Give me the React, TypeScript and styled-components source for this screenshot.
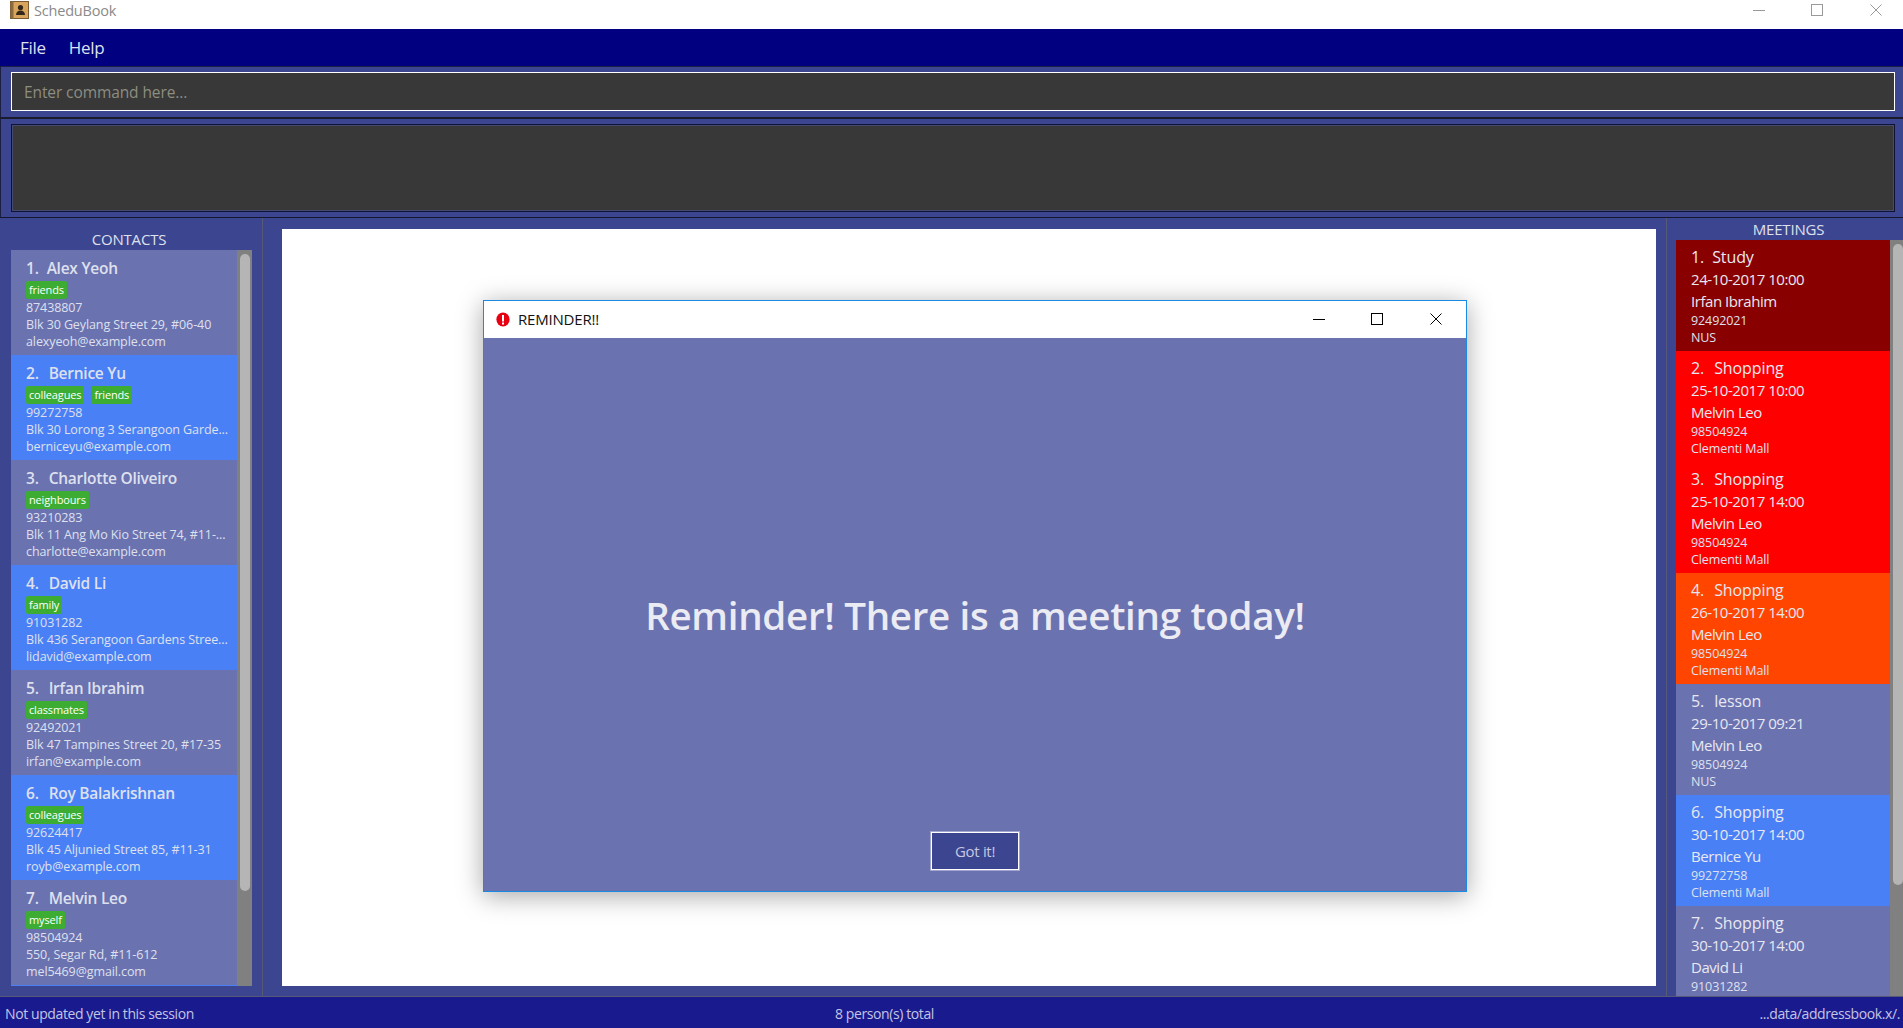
import React from 'react';
import styled, {createGlobalStyle} from 'styled-components';

const contacts = [
  {name: 'Alex Yeoh', tags: ['friends'], phone: '87438807', address: 'Blk 30 Geylang Street 29, #06-40', email: 'alexyeoh@example.com'},
  {name: 'Bernice Yu', tags: ['colleagues', 'friends'], phone: '99272758', address: 'Blk 30 Lorong 3 Serangoon Garde...', email: 'berniceyu@example.com'},
  {name: 'Charlotte Oliveiro', tags: ['neighbours'], phone: '93210283', address: 'Blk 11 Ang Mo Kio Street 74, #11-...', email: 'charlotte@example.com'},
  {name: 'David Li', tags: ['family'], phone: '91031282', address: 'Blk 436 Serangoon Gardens Stree...', email: 'lidavid@example.com'},
  {name: 'Irfan Ibrahim', tags: ['classmates'], phone: '92492021', address: 'Blk 47 Tampines Street 20, #17-35', email: 'irfan@example.com'},
  {name: 'Roy Balakrishnan', tags: ['colleagues'], phone: '92624417', address: 'Blk 45 Aljunied Street 85, #11-31', email: 'royb@example.com'},
  {name: 'Melvin Leo', tags: ['myself'], phone: '98504924', address: '550, Segar Rd, #11-612', email: 'mel5469@gmail.com'},
];

const meetings = [
  {title: 'Study', date: '24-10-2017 10:00', name: 'Irfan Ibrahim', phone: '92492021', place: 'NUS', bg: '#880000'},
  {title: 'Shopping', date: '25-10-2017 10:00', name: 'Melvin Leo', phone: '98504924', place: 'Clementi Mall', bg: '#ff0000'},
  {title: 'Shopping', date: '25-10-2017 14:00', name: 'Melvin Leo', phone: '98504924', place: 'Clementi Mall', bg: '#ff0000'},
  {title: 'Shopping', date: '26-10-2017 14:00', name: 'Melvin Leo', phone: '98504924', place: 'Clementi Mall', bg: '#ff4500'},
  {title: 'lesson', date: '29-10-2017 09:21', name: 'Melvin Leo', phone: '98504924', place: 'NUS', bg: '#6a72b0'},
  {title: 'Shopping', date: '30-10-2017 14:00', name: 'Bernice Yu', phone: '99272758', place: 'Clementi Mall', bg: '#4a80f5'},
  {title: 'Shopping', date: '30-10-2017 14:00', name: 'David Li', phone: '91031282', place: 'Clementi Mall', bg: '#6a72b0'},
];

const CaptionIcon: React.FC<{kind: 'min' | 'max' | 'close'; color: string}> = ({kind, color}) => (
  <svg width="14" height="14" viewBox="0 0 14 14" fill="none" stroke={color} strokeWidth="1" shapeRendering="crispEdges">
    {kind === 'min' && <path d="M1 7.5H13"/>}
    {kind === 'max' && <rect x="1.5" y="1.5" width="11" height="11"/>}
    {kind === 'close' && <path d="M1.5 1.5L12.5 12.5M12.5 1.5L1.5 12.5" shapeRendering="auto"/>}
  </svg>
);

const App: React.FC = () => (
  <Page>
    <Global/>
    <TitleBar>
      <svg width="19" height="18" viewBox="0 0 19 18">
        <rect x="0.5" y="0.5" width="18" height="17" fill="#d9a55c" stroke="#7a5a30"/>
        <rect x="0.5" y="0.5" width="3" height="17" fill="#8a6a3e"/>
        <circle cx="10.5" cy="6.5" r="2.6" fill="#33281a"/>
        <path d="M6 14c0-3 2-4.5 4.5-4.5S15 11 15 14z" fill="#33281a"/>
      </svg>
      <AppName>ScheduBook</AppName>
      <Caption><CaptionIcon kind="min" color="#999"/></Caption>
      <Caption><CaptionIcon kind="max" color="#999"/></Caption>
      <Caption><CaptionIcon kind="close" color="#999"/></Caption>
    </TitleBar>
    <MenuBar>
      <MenuItem>File</MenuItem>
      <MenuItem>Help</MenuItem>
    </MenuBar>
    <CommandRegion>
      <CommandInput>Enter command here...</CommandInput>
    </CommandRegion>
    <ResultRegion>
      <ResultBox/>
    </ResultRegion>
    <Main>
      <ContactsPanel>
        <PanelLabel $shift={5}>CONTACTS</PanelLabel>
        <ScrollArea>
          <List>
            {contacts.map((c, i) => (
              <ContactCard key={c.name} $even={i % 2 === 1}>
                <ContactName><Index $wide={i > 0}>{i + 1}.</Index>{c.name}</ContactName>
                <Tags>
                  {c.tags.map(t => <Tag key={t}>{t}</Tag>)}
                </Tags>
                <SmallLine>{c.phone}</SmallLine>
                <SmallLine>{c.address}</SmallLine>
                <SmallLine>{c.email}</SmallLine>
              </ContactCard>
            ))}
          </List>
          <Track><Thumb $height={637}/></Track>
        </ScrollArea>
      </ContactsPanel>
      <Center>
        <WhitePane/>
      </Center>
      <MeetingsPanel>
        <PanelLabel $shift={2}>MEETINGS</PanelLabel>
        <ScrollArea>
          <List>
            {meetings.map((m, i) => (
              <MeetingCard key={i} style={{background: m.bg}}>
                <MeetingTitle><Index $wide={i > 0}>{i + 1}.</Index>{m.title}</MeetingTitle>
                <MeetingLine>{m.date}</MeetingLine>
                <MeetingLine>{m.name}</MeetingLine>
                <SmallLine>{m.phone}</SmallLine>
                <SmallLine>{m.place}</SmallLine>
              </MeetingCard>
            ))}
          </List>
          <Track><Thumb $height={641}/></Track>
        </ScrollArea>
      </MeetingsPanel>
    </Main>
    <StatusBar>
      <span>Not updated yet in this session</span>
      <span>8 person(s) total</span>
      <StatusPath>...data/addressbook.x/.</StatusPath>
    </StatusBar>
    <Dialog>
      <DialogBar>
        <svg width="14" height="15" viewBox="0 0 14 15">
          <ellipse cx="7" cy="7.5" rx="6.6" ry="7" fill="#e60012"/>
          <rect x="6" y="3" width="2" height="6.5" fill="#fff"/>
          <rect x="6" y="10.5" width="2" height="2" fill="#fff"/>
        </svg>
        <DialogTitle>REMINDER!!</DialogTitle>
        <Caption><CaptionIcon kind="min" color="#000"/></Caption>
        <Caption><CaptionIcon kind="max" color="#000"/></Caption>
        <Caption><CaptionIcon kind="close" color="#000"/></Caption>
      </DialogBar>
      <DialogBody>
        <Message>Reminder! There is a meeting today!</Message>
        <GotIt>Got it!</GotIt>
      </DialogBody>
    </Dialog>
  </Page>
);

export default App;

const Global = createGlobalStyle`
  html, body {
    margin: 0;
    padding: 0;
    height: 100%;
    overflow: hidden;
  }
  body {
    font-family: "Open Sans", "Noto Sans", "Liberation Sans", sans-serif;
  }
`;

const Page = styled.div`
  position: relative;
  width: 1903px;
  height: 1028px;
  display: flex;
  flex-direction: column;
  background: #3c4590;
  overflow: hidden;
`;

const TitleBar = styled.div`
  height: 29px;
  flex: none;
  box-sizing: border-box;
  display: flex;
  align-items: center;
  margin-right: -2px;
  padding: 0 0 9px 10px;
  background: #fff;
`;

const AppName = styled.div`
  flex: 1;
  margin-left: 5px;
  font-size: 14.5px;
  letter-spacing: -0.2px;
  color: #8a8a8a;
`;

const Caption = styled.div`
  width: 58.5px;
  display: flex;
  justify-content: center;
  align-items: center;
`;

const MenuBar = styled.div`
  height: 37px;
  flex: none;
  display: flex;
  align-items: center;
  gap: 23px;
  padding-left: 20px;
  background: #000080;
`;

const MenuItem = styled.div`
  font-size: 17px;
  letter-spacing: -0.3px;
  color: #dfe0ee;
`;

const CommandRegion = styled.div`
  height: 53px;
  flex: none;
  box-sizing: border-box;
  padding: 5px 8px 6px 11px;
  border-top: 1px solid #1b1f44;
  border-left: 1px solid #1b1f44;
  border-bottom: 2px solid #1b1b2e;
`;

const CommandInput = styled.div`
  height: 100%;
  box-sizing: border-box;
  margin-left: -1px;
  padding-left: 12px;
  display: flex;
  align-items: center;
  background: #383838;
  border: 1px solid #fff;
  font-size: 15.5px;
  letter-spacing: -0.1px;
  color: #8d8d80;
`;

const ResultRegion = styled.div`
  height: 99px;
  flex: none;
  box-sizing: border-box;
  padding: 5px 8px 5px 11px;
  border-left: 1px solid #1b1f44;
  border-bottom: 1px solid #14172f;
`;

const ResultBox = styled.div`
  height: 100%;
  box-sizing: border-box;
  margin-left: -1px;
  background: #383838;
  border: 1px solid #0f1235;
  box-shadow: inset 0 0 0 1px #454b70;
`;

const Main = styled.div`
  flex: 1;
  min-height: 0;
  display: grid;
  grid-template-columns: 263px 1fr 237px;
`;

const ContactsPanel = styled.div`
  display: flex;
  flex-direction: column;
  min-height: 0;
  box-sizing: border-box;
  padding: 11px 10px 10px 11px;
  border-right: 1px solid #565a78;
`;

const PanelLabel = styled.div<{$shift: number}>`
  height: 21px;
  flex: none;
  line-height: 21px;
  text-align: center;
  padding-right: ${p => p.$shift}px;
  font-size: 15px;
  letter-spacing: -0.2px;
  color: #dfe0ee;
`;

const ScrollArea = styled.div`
  flex: 1;
  min-height: 0;
  display: flex;
  overflow: hidden;
`;

const List = styled.div`
  flex: 1;
  min-width: 0;
  overflow: hidden;
  background: #4a80f5;
`;

const ContactCard = styled.div<{$even: boolean}>`
  height: 105px;
  box-sizing: border-box;
  padding: 6px 0 0 15px;
  background: ${p => (p.$even ? '#4a80f5' : '#6a72b0')};
`;

const Index = styled.span<{$wide: boolean}>`
  margin-right: ${p => (p.$wide ? 10 : 8)}px;
`;

const ContactName = styled.div`
  height: 24px;
  line-height: 24px;
  font-size: 15.5px;
  font-weight: 600;
  letter-spacing: -0.25px;
  white-space: nowrap;
  color: #dfe0ee;
`;

const Tags = styled.div`
  display: flex;
  gap: 7px;
  height: 19px;
  align-items: center;
`;

const Tag = styled.span`
  height: 18px;
  padding: 0 3px;
  line-height: 17px;
  border-radius: 2px;
  background: #3cad32;
  font-size: 11px;
  letter-spacing: -0.15px;
  color: #fff;
`;

const SmallLine = styled.div`
  height: 17px;
  line-height: 17px;
  font-size: 12.5px;
  letter-spacing: -0.1px;
  white-space: nowrap;
  color: #dfe0ee;
`;

const Track = styled.div`
  width: 15px;
  flex: none;
  box-sizing: border-box;
  padding: 4px 2px 0 3px;
  background: #808080;
`;

const Thumb = styled.div<{$height: number}>`
  height: ${p => p.$height}px;
  border-radius: 5px;
  background: #b5b5b5;
`;

const Center = styled.div`
  min-height: 0;
  padding: 11px 10px 10px 19px;
`;

const WhitePane = styled.div`
  height: 100%;
  background: #fff;
`;

const MeetingsPanel = styled.div`
  display: flex;
  flex-direction: column;
  min-height: 0;
  box-sizing: border-box;
  padding: 1px 0 0 9px;
  border-left: 1px solid #565a78;

  ${Track} {
    width: 13px;
    padding: 4px 0 0 3px;
  }
`;

const MeetingCard = styled.div`
  height: 111px;
  box-sizing: border-box;
  padding: 5px 0 0 15px;
`;

const MeetingTitle = styled.div`
  height: 24px;
  line-height: 24px;
  font-size: 16px;
  letter-spacing: -0.1px;
  font-weight: 500;
  white-space: nowrap;
  color: #e8e8f0;
`;

const MeetingLine = styled.div`
  height: 21.5px;
  line-height: 21.5px;
  font-size: 15px;
  letter-spacing: -0.45px;
  white-space: nowrap;
  color: #e8e8f0;
`;

const StatusBar = styled.div`
  height: 32px;
  flex: none;
  box-sizing: border-box;
  display: grid;
  grid-template-columns: 830px auto 1fr;
  align-items: center;
  padding: 1px 3px 0 5px;
  background: #1a1a8f;
  border-top: 1px solid #565a78;
  font-size: 14px;
  letter-spacing: -0.4px;
  color: #c4c5e4;
`;

const StatusPath = styled.span`
  text-align: right;
`;

const Dialog = styled.div`
  position: absolute;
  left: 483px;
  top: 300px;
  width: 984px;
  height: 592px;
  box-sizing: border-box;
  display: flex;
  flex-direction: column;
  border: 1px solid #1a8ae5;
  background: #fff;
  box-shadow: 0 4px 24px rgba(0, 0, 0, 0.35);
`;

const DialogBar = styled.div`
  height: 37px;
  flex: none;
  box-sizing: border-box;
  display: flex;
  align-items: center;
  padding: 0 1px 1px 12px;
`;

const DialogTitle = styled.div`
  flex: 1;
  margin-left: 8px;
  font-size: 15px;
  letter-spacing: -0.2px;
  color: #111;
`;

const DialogBody = styled.div`
  flex: 1;
  min-height: 0;
  display: flex;
  flex-direction: column;
  align-items: center;
  padding-bottom: 21px;
  background: #6a72b0;
`;

const Message = styled.div`
  flex: 1;
  display: flex;
  align-items: center;
  padding-top: 59px;
  font-size: 38.5px;
  font-weight: 600;
  letter-spacing: -0.3px;
  color: #ebebf4;
`;

const GotIt = styled.div`
  width: 88px;
  height: 38px;
  box-sizing: border-box;
  display: flex;
  align-items: center;
  justify-content: center;
  border: 1px solid #fff;
  outline: 1px solid #a3a7d0;
  background: #3c4590;
  font-size: 15px;
  letter-spacing: -0.3px;
  color: #c6c8e2;
`;
